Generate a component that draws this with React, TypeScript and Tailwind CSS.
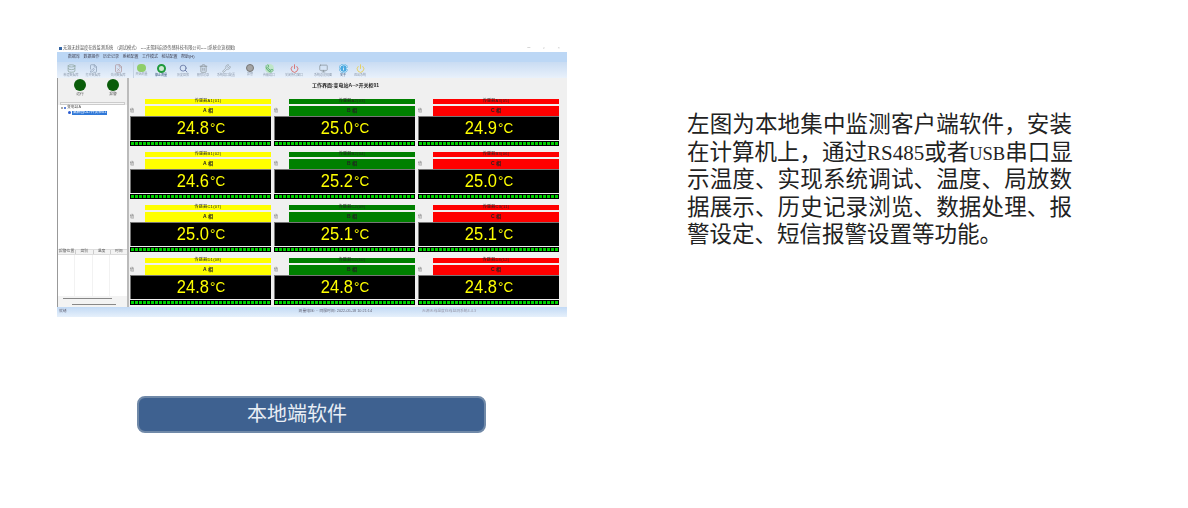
import { Database, FilePen, FileX, Search, Trash2, Wrench, Phone, Power, Monitor, Info } from "lucide-react";

const menus = ["数据库", "数据操作", "历史记录", "系统配置", "工作模式", "稍站配置", "帮助(H)"];

const tools = [
  { label: "新建数据库", w: "w-[24px]", icon: <Database className="h-[9px] w-[9px] text-[#8fa5a0]" />, off: true },
  { label: "打开数据库", w: "w-[20px]", icon: <FilePen className="h-[9px] w-[9px] text-[#8fa0b5]" />, off: true },
  { label: "关闭数据库", w: "w-[30px]", icon: <FileX className="h-[9px] w-[9px] text-[#b09aa0]" />, off: true },
  { label: "开始测量", w: "w-[16px]", icon: <span className="h-[8px] w-[9px] rounded-full bg-[#8fce6a]" />, off: true, sep: true },
  { label: "停止测量", w: "w-[24px]", icon: <span className="h-[9px] w-[9px] rounded-full border-2 border-[#1f9a3c] bg-[#cfe8d0]" /> },
  { label: "历史回放", w: "w-[20px]", icon: <Search className="h-[9px] w-[9px] text-[#5a6a9a]" />, off: true },
  { label: "删除记录", w: "w-[20px]", icon: <Trash2 className="h-[9px] w-[9px] text-[#8a9296]" />, off: true },
  { label: "系统端口配置", w: "w-[26px]", icon: <Wrench className="h-[9px] w-[9px] text-[#9aa3aa]" />, off: true },
  { label: "报警", w: "w-[22px]", icon: <span className="h-[8px] w-[8px] rounded-full border border-[#777] bg-[#a4a4a4]" />, off: true },
  { label: "传输端口", w: "w-[16px]", icon: <Phone className="h-[9px] w-[9px] rounded-full bg-[#bfe6c8] text-[#3f9a5f]" />, off: true },
  { label: "关闭所有窗口", w: "w-[34px]", icon: <Power className="h-[9px] w-[9px] text-[#d9534f]" />, off: true },
  { label: "系统总览视图", w: "w-[24px]", icon: <Monitor className="h-[9px] w-[9px] text-[#8a949c]" />, off: true },
  { label: "关于", w: "w-[16px]", icon: <Info className="h-[9px] w-[9px] rounded-full bg-[#4aa8e0] text-white" /> },
  { label: "退出系统", w: "w-[18px]", icon: <Power className="h-[9px] w-[9px] text-[#e8c93a]" />, off: true },
];

const cards = [
  { name: "传感器A1(01)", phase: "A 相", temp: "24.8", tone: "y" },
  { name: "传感器A2(03)", phase: "B 相", temp: "25.0", tone: "g" },
  { name: "传感器A3(05)", phase: "C 相", temp: "24.9", tone: "r" },
  { name: "传感器B1(02)", phase: "A 相", temp: "24.6", tone: "y" },
  { name: "传感器B2(04)", phase: "B 相", temp: "25.2", tone: "g" },
  { name: "传感器B3(06)", phase: "C 相", temp: "25.0", tone: "r" },
  { name: "传感器C1(07)", phase: "A 相", temp: "25.0", tone: "y" },
  { name: "传感器C2(09)", phase: "B 相", temp: "25.1", tone: "g" },
  { name: "传感器C3(11)", phase: "C 相", temp: "25.1", tone: "r" },
  { name: "传感器D1(08)", phase: "A 相", temp: "24.8", tone: "y" },
  { name: "传感器D2(10)", phase: "B 相", temp: "24.8", tone: "g" },
  { name: "传感器D3(12)", phase: "C 相", temp: "24.8", tone: "r" },
];

const toneClass: Record<string, string> = {
  y: "bg-[#ffff00]",
  g: "bg-[#008000]",
  r: "bg-[#ff0000]",
};

const paragraph = [
  <>左图为本地集中监测客户端软件，安装</>,
  <>
    在计算机上，通过<span className="text-[21px]">RS485</span>或者<span className="text-[18.5px]">USB</span>串口显
  </>,
  <>示温度、实现系统调试、温度、局放数</>,
  <>据展示、历史记录浏览、数据处理、报</>,
];

const segments = Array.from({ length: 35 });

function SensorCard({ name, phase, temp, tone }: { name: string; phase: string; temp: string; tone: string }) {
  return (
    <div className="flex h-[47px] flex-col">
      <div className={`ml-[15px] flex h-[5px] items-center justify-center text-[4px] leading-none tracking-[0.3px] text-[#222] ${toneClass[tone]}`}>
        {name}
      </div>
      <div className="mt-[2px] flex h-[10px]">
        <span className="flex w-[15px] items-center text-[4px] text-[#666]">值</span>
        <div className={`flex flex-1 items-center justify-center text-[5px] font-bold text-[#222] ${toneClass[tone]}`}>{phase}</div>
      </div>
      <div className="flex h-[25px] items-center justify-center border-t border-l border-[#777] bg-black pb-[2px] text-[#ffff00]">
        <span className="scale-y-115 text-[16.5px] leading-none">{temp}</span>
        <span className="ml-[1px] scale-y-115 text-[13.5px] leading-none font-light">°C</span>
      </div>
      <div className="mt-[1px] flex h-[5px] items-center justify-between bg-black px-[1px]">
        {segments.map((_, i) => (
          <span key={i} className="h-[3px] w-[2.5px] bg-[#00d000]" />
        ))}
      </div>
    </div>
  );
}

function MonitorWindow() {
  return (
    <div className="flex h-[273px] w-[510px] flex-col overflow-hidden bg-[#f0f0f0] font-['Liberation_Sans','Noto_Sans_CJK_SC',sans-serif] text-[4px] leading-none blur-[0.4px]">
      <div className="flex h-[8px] items-center bg-white pl-[2px] text-[4.2px] whitespace-nowrap text-[#555]">
        <span className="mr-[1px] h-[3px] w-[3px] bg-[#3465a4]" />
        无源无线温度在线监测系统 （调试模式） ----无锡科启恐传感科技有限公司---- [系统总览视图]
        <span className="ml-auto mr-[12px] text-[#777]">－</span>
        <span className="mr-[13px] text-[#777]">▫</span>
        <span className="mr-[7px] text-[#bbb]">×</span>
      </div>
      <div className="flex h-[10px] items-center gap-[3.5px] bg-[#bcd7f5] pl-[11px] text-[4px] text-[#445]">
        {menus.map((m) => (
          <span key={m}>{m}</span>
        ))}
      </div>
      <div className="flex h-[16px] items-stretch bg-gradient-to-b from-[#c9dcf3] to-[#e9f1fb] pl-[2px]">
        {tools.map((t) => (
          <div key={t.label} className={`flex shrink-0 flex-col items-center justify-center gap-[1px] ${t.w} ${t.sep ? "border-l border-[#c5d3e3]" : ""}`}>
            {t.icon}
            <span className={`text-[3px] whitespace-nowrap ${t.off ? "text-[#8f9cae]" : "text-[#23456f]"}`}>{t.label}</span>
          </div>
        ))}
      </div>
      <div className="flex min-h-0 flex-1 border-l border-[#999]">
        <div className="flex w-[71px] flex-col border-r-2 border-[#bbb]">
          <div className="flex h-[24px] items-start gap-[21px] bg-[#f0f0f0] pl-[16px] pt-[1px] text-center text-[3.8px] text-[#555]">
            <div className="flex w-[12px] flex-col items-center gap-[2px]">
              <span className="h-[12px] w-[12px] shrink-0 rounded-full bg-[#0a5c0a]" />
              运行
            </div>
            <div className="flex w-[12px] flex-col items-center gap-[2px]">
              <span className="h-[12px] w-[12px] shrink-0 rounded-full bg-[#0a5c0a]" />
              报警
            </div>
          </div>
          <div className="mx-[2px] h-[3px] border border-[#ccc] bg-[#f5f5f5]" />
          <div className="flex-1 bg-white pl-[3px] pt-[1px] text-[3.8px] text-[#555]">
            <div className="flex items-center gap-[1px]">
              <span className="h-[2px] w-[2px] border border-[#aaa]" />
              <span className="h-[2px] w-[2px] rounded-full bg-[#2a5bd0]" />
              变电站A
            </div>
            <div className="ml-[7px] mt-[1px] flex items-center gap-[1px]">
              <span className="h-[3px] w-[3px] rounded-full bg-[#2a5bd0]" />
              <span className="bg-[#2f78d8] px-[1px] text-white">高新园01#开关柜01</span>
            </div>
          </div>
          <div className="grid h-[6px] grid-cols-4 items-center border-y border-[#ddd] bg-[#f3f3f3] text-center text-[3.8px] text-[#555]">
            <span>报警位置</span>
            <span className="border-l border-[#ccc]">类别</span>
            <span className="border-l border-[#ccc]">温度</span>
            <span className="border-l border-[#ccc]">时间</span>
          </div>
          <div className="grid h-[41px] grid-cols-4 bg-white">
            <span className="border-r border-[#f2f2f2]" />
            <span className="border-r border-[#f2f2f2]" />
            <span className="border-r border-[#f2f2f2]" />
            <span />
          </div>
          <div className="flex h-[11px] flex-col gap-[5px] bg-[#f3f3f3] pl-[5px] pt-[2px]">
            <div className="h-[1px] w-[49px] bg-[#888]" />
            <div className="ml-[9px] h-[1px] w-[44px] bg-[#888]" />
          </div>
        </div>
        <div className="flex-1 pl-[1px]">
          <div className="flex h-[21px] items-start justify-center pr-[6px] pt-[5px] text-[5px] font-bold text-[#222]">
            工作界面:变电站A--&gt;开关柜01
          </div>
          <div className="grid w-[429px] grid-cols-3 gap-x-[3px] gap-y-[6px]">
            {cards.map((c) => (
              <SensorCard key={c.name} {...c} />
            ))}
          </div>
        </div>
      </div>
      <div className="flex h-[10px] items-center bg-gradient-to-b from-[#c3daf5] to-[#e6f0fb] pl-[2px] text-[3.8px] text-[#667]">
        <span>就绪</span>
        <span className="ml-[232px]">测量电压: ·· 同服时间: 2022-05-18 10:21:14</span>
        <span className="ml-[50px] text-[#99a]">无源无线温度在线监测系统4.4.3</span>
      </div>
    </div>
  );
}

export default function App() {
  return (
    <div className="flex h-[508px] w-[1188px] bg-white pl-[57px] pt-[44px] font-['Liberation_Serif','Noto_Sans_CJK_SC',serif]">
      <div className="w-[510px]">
        <MonitorWindow />
        <div className="ml-[80px] mt-[79px] flex h-[37px] w-[349px] items-center rounded-lg border-2 border-[#7089a8] bg-[#3e6190] pb-[1px] pl-[108px] text-[20px] text-[#e9eef5]">
          本地端软件
        </div>
      </div>
      <div className="ml-[120px] mt-[67px] h-fit w-[385px] text-[22.5px] leading-[27.5px] text-[#222]">
        {paragraph.map((line, i) => (
          <p key={i} className="h-[27.5px] whitespace-nowrap text-justify [text-align-last:justify]">
            {line}
          </p>
        ))}
        <p className="h-[27.5px]">警设定、短信报警设置等功能。</p>
      </div>
    </div>
  );
}
